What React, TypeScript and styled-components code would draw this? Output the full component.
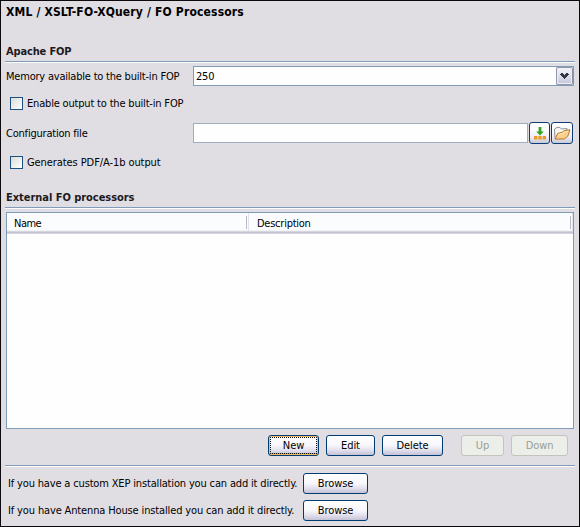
import React from "react";
import styled, { createGlobalStyle, css } from "styled-components";

const GlobalStyle = createGlobalStyle`
  * { box-sizing: border-box; }
  body { margin: 0; }
`;

const Panel = styled.main`
  width: 580px;
  height: 527px;
  padding: 0 4px;
  border: 1px solid #0c0a0d;
  background: #e1dee3;
  color: #000;
  font: 11px/14px "DejaVu Sans Condensed", "DejaVu Sans", sans-serif;
  font-stretch: condensed;
  overflow: hidden;
`;

const Text = styled.span<{ $spacing?: number }>`
  display: block;
  white-space: nowrap;
  letter-spacing: ${(p) => p.$spacing ?? 0}px;
`;

const Title = styled.h1`
  height: 43px;
  margin: 0;
  padding: 3px 0 0 1px;
  font-size: 12px;
  line-height: 16px;
  font-weight: bold;
  white-space: nowrap;
`;

const Rule = styled.div`
  width: 570px;
  height: 2px;
  border-top: 1px solid #7f9db9;
  border-bottom: 1px solid #fbfbfc;
`;

const SectionTitle = styled.h2`
  height: 17px;
  margin: 0;
  padding-left: 1px;
  color: #1c1b1e;
  font-size: 11px;
  line-height: 15px;
  font-weight: bold;
`;

const FieldRow = styled.div`
  display: grid;
  grid-template-columns: 188px 1fr;
  align-items: center;
  height: 20px;
`;

const FieldLabel = styled.label`
  padding: 2px 0 0 1px;
`;

const ComboBox = styled.div`
  display: flex;
  width: 381px;
  height: 20px;
  border: 1px solid #7f9db9;
  background: #fefefe;
`;

const ComboValue = styled.span`
  flex: 1;
  padding-left: 2px;
  line-height: 19px;
  letter-spacing: -0.2px;
`;

const ComboArrow = styled.span`
  display: flex;
  align-items: center;
  justify-content: center;
  width: 17px;
  height: 18px;
  border: 1px solid #9297a9;
  border-right-color: #858fa5;
  border-radius: 2px;
  background: linear-gradient(#f5f5fa, #c3c7da);
  box-shadow: inset 0 0 0 1px #eeeef5;
`;

const CheckRow = styled.div`
  display: flex;
  align-items: flex-start;
  gap: 4px;
  height: 14px;
  padding-left: 5px;
`;

const CheckBox = styled.span`
  width: 13px;
  height: 13px;
  border: 1px solid #1c5180;
  background: linear-gradient(135deg, #dcdcd7, #fff);
`;

const FileControls = styled.div`
  display: flex;
  align-items: center;
  height: 20px;
`;

const FileInput = styled.input`
  width: 335px;
  height: 20px;
  margin: 0 1px 0 0;
  border: 1px solid #9cafbf;
  background: #fefefe;
`;

const IconButton = styled.button<{ $width: number }>`
  display: grid;
  flex: none;
  place-items: center;
  width: ${(p) => p.$width}px;
  height: 22px;
  margin: 0 1px 0 0;
  padding: 0;
  border: 1px solid #0d3d77;
  border-radius: 3px;
  background: linear-gradient(#fff 20%, #eeedf6 70%, #c8c7d9);
`;

const Table = styled.section`
  width: 568px;
  height: 217px;
  margin: 3px 0 0 1px;
  border: 1px solid #7f9db9;
  background: #fefefe;
`;

const TableHeader = styled.header`
  display: grid;
  grid-template-columns: 242px 1fr;
  height: 21px;
  border-bottom: 1px solid #d4d3df;
  background: linear-gradient(#fafcfe 0 17px, #e8e8ef 18px, #c4c3d2 19px 20px);
`;

const HeaderCell = styled.div<{ $inset: number }>`
  display: flex;
  align-items: center;
  height: 18px;
  padding: 3px 0 0 ${(p) => p.$inset}px;
  background: linear-gradient(#b9b8c9, #b9b8c9) right 1px top 3px / 1px 13px no-repeat;
  border-right: 1px solid #e3e2ea;
`;

const ButtonBar = styled.div`
  display: flex;
  gap: 7px;
  width: 563px;
  height: 36px;
  padding-top: 6px;
  justify-content: flex-end;
`;

const PushButton = styled.button<{ $width: number; $focused?: boolean; $gap?: number }>`
  position: relative;
  width: ${(p) => p.$width}px;
  height: 21px;
  margin: 0 ${(p) => p.$gap ?? 0}px 0 0;
  padding: 1px 0 0;
  border: 1px solid #003c74;
  border-radius: 3px;
  background: linear-gradient(#fff 0%, #f7f6fb 50%, #dfddea 78%, #c3c1d5);
  color: #000;
  font: inherit;
  letter-spacing: -0.1px;
  white-space: nowrap;
  ${(p) =>
    p.$focused &&
    css`
      box-shadow: inset 0 0 0 1px #f6bd5e, inset 0 -2px 0 #e59b1c;
      &::before {
        content: "";
        position: absolute;
        inset: 1px;
        border: 1px dotted #111;
      }
    `}
  &:disabled {
    border-color: #c5c4bb;
    background: #eceeea;
    color: #9aa092;
  }
`;

const InstallRow = styled.div`
  display: flex;
  align-items: center;
  height: 21px;
  padding-left: 3px;
`;

const InstallText = styled.div`
  width: 295px;
`;

const Spacer = styled.div<{ $height: number }>`
  height: ${(p) => p.$height}px;
`;

const Chevron = () => (
  <svg width="9" height="7" viewBox="0 0 9 7" shapeRendering="crispEdges">
    <path d="M0 1h1v-1h2v1h1v1h1v-1h1v-1h2v1h1v1h-1v1h-1v1h-1v1h-1v1h-1v-1h-1v-1h-1v-1h-1v-1h-1z" fill="#333640" />
  </svg>
);

const InsertIcon = () => (
  <svg width="14" height="15" viewBox="0 0 14 15">
    <path d="M5.6 1h2.8v4.5h2.4L7 9.4 3.2 5.5h2.4z" fill="#32a51e" />
    <path d="M1 10h3.4v3.6H1zM5.3 10h3.4v3.6H5.3zM9.6 10H13v3.6H9.6z" fill="#e99a29" />
  </svg>
);

const FolderIcon = () => (
  <svg width="18" height="16" viewBox="0 0 18 16">
    <path d="M2 13.5 1.5 4 4 2.4h3L8.4 4l5.6-.5V8L6 12z" fill="#f8f6ef" stroke="#8d9399" />
    <path d="M2.2 14.2 4.6 8.4l5-1.2 1.4-1.6 6-.8-2.2 6.4-3.2 2.7z" fill="#fbd08a" stroke="#b9782d" />
    <path d="m5.6 9.4 4.8-1.2 1.2-1.3 3.8-.6" fill="none" stroke="#ffe9bc" />
  </svg>
);

export default function App() {
  return (
    <>
      <GlobalStyle />
      <Panel>
        <Title>
          <Text $spacing={0.17}>XML / XSLT-FO-XQuery / FO Processors</Text>
        </Title>
        <SectionTitle>
          <Text $spacing={-0.15}>Apache FOP</Text>
        </SectionTitle>
        <Rule />
        <Spacer $height={3} />
        <FieldRow>
          <FieldLabel>
            <Text $spacing={-0.21}>Memory available to the built-in FOP</Text>
          </FieldLabel>
          <ComboBox>
            <ComboValue>250</ComboValue>
            <ComboArrow>
              <Chevron />
            </ComboArrow>
          </ComboBox>
        </FieldRow>
        <Spacer $height={11} />
        <CheckRow>
          <CheckBox />
          <Text $spacing={-0.18}>Enable output to the built-in FOP</Text>
        </CheckRow>
        <Spacer $height={12} />
        <FieldRow>
          <FieldLabel>
            <Text $spacing={-0.21}>Configuration file</Text>
          </FieldLabel>
          <FileControls>
            <FileInput aria-label="Configuration file" />
            <IconButton $width={21} aria-label="Insert editor variables">
              <InsertIcon />
            </IconButton>
            <IconButton $width={22} aria-label="Browse for file">
              <FolderIcon />
            </IconButton>
          </FileControls>
        </FieldRow>
        <Spacer $height={13} />
        <CheckRow>
          <CheckBox />
          <Text $spacing={-0.08}>Generates PDF/A-1b output</Text>
        </CheckRow>
        <Spacer $height={20} />
        <SectionTitle>
          <Text $spacing={-0.04}>External FO processors</Text>
        </SectionTitle>
        <Rule />
        <Table>
          <TableHeader>
            <HeaderCell $inset={7}>
              <Text $spacing={-0.5}>Name</Text>
            </HeaderCell>
            <HeaderCell $inset={8}>
              <Text $spacing={-0.25}>Description</Text>
            </HeaderCell>
          </TableHeader>
        </Table>
        <ButtonBar>
          <PushButton $width={51} $focused>New</PushButton>
          <PushButton $width={49}>Edit</PushButton>
          <PushButton $width={61} $gap={11}>Delete</PushButton>
          <PushButton $width={43} disabled>Up</PushButton>
          <PushButton $width={57} disabled>Down</PushButton>
        </ButtonBar>
        <Rule />
        <Spacer $height={6} />
        <InstallRow>
          <InstallText>
            <Text $spacing={-0.16}>If you have a custom XEP installation you can add it directly.</Text>
          </InstallText>
          <PushButton $width={65}>Browse</PushButton>
        </InstallRow>
        <Spacer $height={6} />
        <InstallRow>
          <InstallText>
            <Text $spacing={-0.14}>If you have Antenna House installed you can add it directly.</Text>
          </InstallText>
          <PushButton $width={65}>Browse</PushButton>
        </InstallRow>
      </Panel>
    </>
  );
}
